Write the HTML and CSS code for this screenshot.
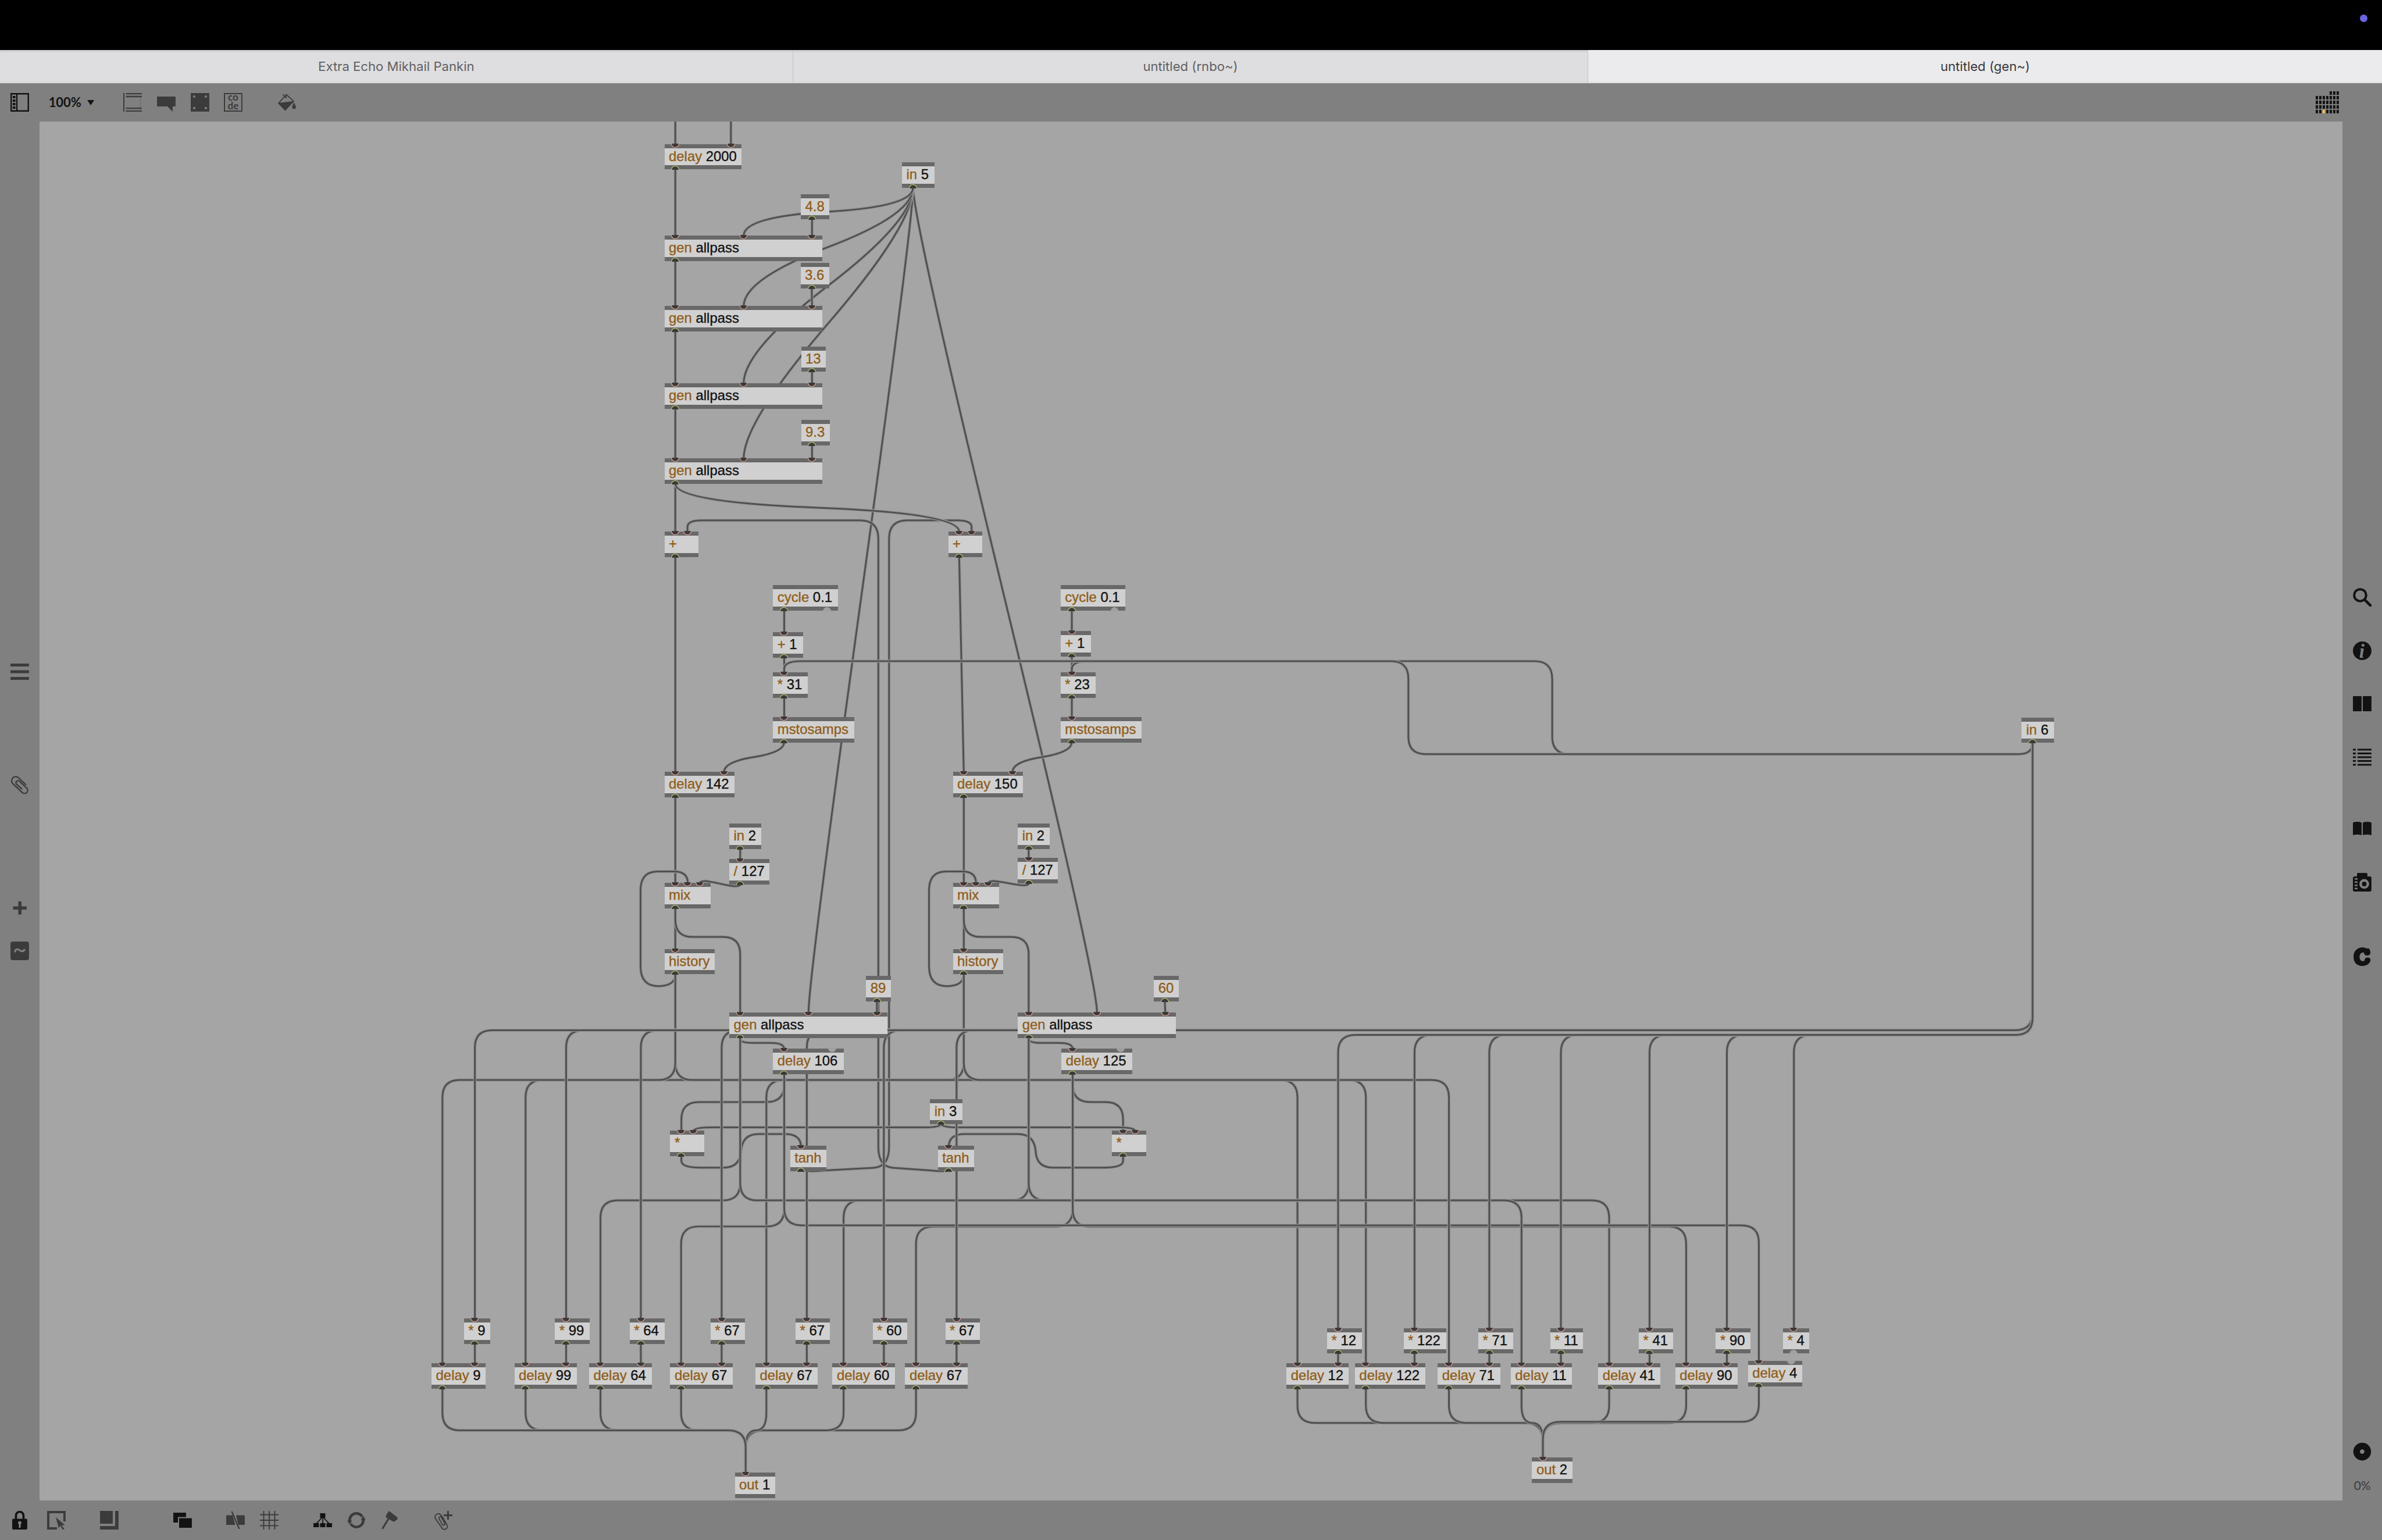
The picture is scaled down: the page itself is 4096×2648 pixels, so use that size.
FILE: index.html
```html
<!DOCTYPE html>
<html lang="en">
<head>
<meta charset="utf-8">
<title>untitled (gen~)</title>
<link rel="stylesheet" href="styles.css">
</head>
<body>
<div class="app">
  <div class="menubar"><span class="camera-dot"></span></div>
  <nav class="tabs">
    <div class="tab">Extra Echo Mikhail Pankin</div>
    <div class="tab">untitled (rnbo~)</div>
    <div class="tab tab-active">untitled (gen~)</div>
  </nav>
  <header class="toolbar toolbar-top">
    <svg class="icon strong" viewBox="0 0 32 32"><path d="M1.2 1.2H30.8V30.8H1.2zM11 1V31" fill="none" stroke="currentColor" stroke-width="2.4"/><path d="M4 5h4.500v4H4zM4 11h4.500v4H4zM4 17h4.500v4H4zM4 23h4.500v4H4z"/></svg>
    <div class="zoom-level">100%<span class="caret"></span></div>
    <div class="tool-group">
      <svg class="icon" viewBox="0 0 32 32"><path d="M0 0h2v32H0zM4.500 0H32v2H4.500zM4.500 5H32v2.400H4.500zM4.500 25H32v2.200H4.500zM4.500 30H32v2H4.500z"/><path d="M29.500 7v18M4.500 3.500H32M4.500 28.500H32" stroke="#686868" stroke-width="1" fill="none"/></svg>
      <svg class="icon" viewBox="0 0 32 32"><path d="M0 6h32v17h-5v9l-9-9H0z"/></svg>
      <svg class="icon" viewBox="0 0 32 32"><path d="M0 0h32v32H0z"/><g fill="#808080"><circle cx="6" cy="6" r="2.100"/><circle cx="26" cy="6" r="2.100"/><circle cx="6" cy="26" r="2.100"/><circle cx="26" cy="26" r="2.100"/></g></svg>
      <svg class="icon" viewBox="0 0 32 32"><path d="M1 1H31V31H1z" fill="none" stroke="currentColor" stroke-width="2"/><text class="code-text" x="16" y="13.500">co</text><text class="code-text" x="16" y="28">de</text></svg>
    </div>
    <svg class="icon bucket" viewBox="0 0 32 32"><path d="M15.500 2.500L2 17.500L13.500 29L28 14z" fill="none" stroke="currentColor" stroke-width="1.800"/><path d="M1 17l27-3L13.500 30.500zM28.500 16c2 4 3.500 6 3.500 8.200a3.300 3.300 0 0 1-6.600 0c0-2.200 1.600-4.200 3.100-8.200z"/><path d="M9 2l7 7M12 7l4-2" stroke="currentColor" stroke-width="1.600"/></svg>
    <svg class="icon-grid strong" viewBox="0 0 42 40" id="level-grid"></svg>
  </header>
  <main class="workspace">
    <aside class="rail rail-left">
      <svg class="icon" viewBox="0 0 32 32"><path d="M0 2h32v5H0zM0 13.500h32v5H0zM0 25h32v5H0z"/></svg>
      <svg class="icon" viewBox="0 0 32 32"><path d="M27 16L14 3.500A7 7 0 0 0 4 13.500L20.500 29A5.500 5.500 0 0 0 28.500 21.500L15.500 9.500A3.500 3.500 0 0 0 10.500 14.500L20 23" fill="none" stroke="currentColor" stroke-width="2.300"/></svg>
      <svg class="icon" viewBox="0 0 32 32"><path d="M13.500 5h5.500v8.500h9v5.500h-9v8.500h-5.500v-8.500h-9v-5.500h9z"/></svg>
      <svg class="icon" viewBox="0 0 32 32"><rect width="32" height="32" rx="4"/><path d="M7.500 18.500c1-7 6-5.500 8.500-3.500s7 3 8.500-2" fill="none" stroke="#808080" stroke-width="3.200"/></svg>
    </aside>
    <section class="patcher" id="patcher">
      <svg class="cords" id="cords" viewBox="68 210 3976 2380"></svg>
    </section>
    <aside class="rail rail-right">
      <div class="rail-group">
        <svg class="icon" viewBox="0 0 32 32"><circle cx="12.500" cy="12.500" r="10.300" fill="none" stroke="currentColor" stroke-width="4"/><path d="M20 20l10 10" stroke="currentColor" stroke-width="4.600" stroke-linecap="round"/></svg>
        <svg class="icon" viewBox="0 0 32 32"><circle cx="16" cy="16" r="16"/><text class="info-text" x="15.500" y="28">i</text></svg>
        <svg class="icon" viewBox="0 0 32 32"><path d="M0 3h15v26H0zM17 3h15v26H17z"/></svg>
        <svg class="icon" viewBox="0 0 32 32"><path d="M0 1.500h5v3H0zM8 1.500h24v3H8zM0 8h5v3H0zM8 8h24v3H8zM0 14.500h5v3H0zM8 14.500h24v3H8zM0 21h5v3H0zM8 21h24v3H8zM0 27.500h5v3H0zM8 27.500h24v3H8z"/></svg>
      </div>
      <div class="rail-group">
        <svg class="icon" viewBox="0 0 32 32"><path d="M0 5.500q7.500-3 15 0V27q-7.500-2-15 0zM17 5.500q7.500-3 15 0V27q-7.500-2-15 0z"/></svg>
        <svg class="icon" viewBox="0 0 32 32"><path d="M4 6h3V2q0-2 2-2h14q2 0 2 2v4h4q3 0 3 3v20q0 3-3 3H3q-3 0-3-3V9q0-3 3-3z"/><path d="M3 9h5v2.500H3zM3 14.500h5V17H3zM3 20h5v2.500H3zM3 25.500h5V28H3z" fill="#808080"/><circle cx="19.500" cy="19" r="6.200" fill="none" stroke="#808080" stroke-width="4.400"/></svg>
      </div>
      <svg class="icon brand" viewBox="0 0 32 32"><path d="M17 0c4 0 5.500 2 7.500 2s4-1.500 5.500 5c1 5-2 7.500-6 7c-3.500-.5-4.500-2-5-5c-4-1-7.500 2-7.500 7.500c0 6 4 8.500 8.500 6.500c0-4 2-5.500 5.500-5.500c4 0 5.500 2.500 4.500 6c-2 5.500-7 8.500-14 8.500C7 32 1 26 1 16S8 0 17 0z"/></svg>
      <svg class="icon" viewBox="0 0 32 32"><circle cx="16" cy="16" r="9.300" fill="none" stroke="currentColor" stroke-width="12"/><circle cx="16" cy="16" r="3.800" fill="#808080"/></svg>
      <div class="cpu">0%</div>
    </aside>
  </main>
  <footer class="toolbar toolbar-bottom">
    <svg class="icon strong" viewBox="0 0 32 32"><path d="M9.500 15V8a6.500 6.500 0 0 1 13 0v7" fill="none" stroke="currentColor" stroke-width="3.600"/><rect x="3" y="13.500" width="26" height="18.500" rx="2"/><path d="M16 17.500a3 3 0 0 1 1.600 5.500v6h-3.200v-6A3 3 0 0 1 16 17.500z" fill="#808080"/></svg>
    <svg class="icon gap-a" viewBox="0 0 32 32"><path d="M0 0h32v18h-4V4H4v24h13v4H0z"/><path d="M15 11l15.500 13-5.500 1 5 6-3 1.500-4-7-3 4z"/></svg>
    <svg class="icon gap-b" viewBox="0 0 32 32"><path d="M0 0h22v22H0zM26 0h6v32H0v-6h26z"/></svg>
    <svg class="icon strong gap-c" viewBox="0 0 32 32"><path d="M0 3h22v7.500H8V20H0zM10 12.500h22V29H10z"/></svg>
    <svg class="icon gap-b" viewBox="0 0 32 32"><path d="M0 7.500h11l4.500 16.500H0zM17 7.500h15V24H21z"/><path d="M9.500 1l13 30" stroke="currentColor" stroke-width="2.400"/></svg>
    <svg class="icon" viewBox="0 0 32 32"><path d="M6.500 0v32M16 0v32M25.500 0v32M0 6.500h32M0 16h32M0 25.500h32" stroke="currentColor" stroke-width="1.900"/></svg>
    <svg class="icon strong gap-b" viewBox="0 0 32 32"><path d="M11.500 4h9v8h-9zM0 21h9.500v7H0zM11.500 21h9v7h-9zM22.500 21H32v7h-9.500z"/><path d="M16 11v11M15 11L5 22M17 11l10 11" stroke="currentColor" stroke-width="1.700"/></svg>
    <svg class="icon" viewBox="0 0 32 32"><circle cx="16" cy="16" r="11.800" fill="none" stroke="currentColor" stroke-width="4.600"/><path d="M0 16.500h8.500L4.500 23.500zM32 15.500h-8.500L27.500 8.500z"/><path d="M4.500 23.500l4.500-6M27.500 8.500l-4.500 6" stroke="#808080" stroke-width="1.200"/></svg>
    <svg class="icon" viewBox="0 0 32 32"><path d="M3.500 31L15 12" stroke="currentColor" stroke-width="3"/><path d="M15 0l14.500 11v3.500L24 18.500l-2.500-.5L9 10.500l2-5z"/></svg>
    <svg class="icon gap-b" viewBox="0 0 32 32"><path d="M12 9L19 21.500a2.500 2.500 0 0 1-4 2.500L9 13.500A3.500 3.500 0 0 1 15 10.500L22.500 24A5 5 0 0 1 14 29.500L3 13.500A5.500 5.500 0 0 1 12.500 7.500L19 18" fill="none" stroke="currentColor" stroke-width="1.900"/><path d="M23 0h3v6h6v3h-6v6h-3V9h-6V6h6z"/></svg>
  </footer>
</div>
<script src="patch.js"></script>
</body>
</html>
```

FILE: styles.css
```css
* { box-sizing: border-box; }
html, body { margin: 0; width: 100%; height: 100%; overflow: hidden; background: #808080; }

.app {
  display: flex;
  flex-direction: column;
  width: 4112px;
  height: 2658.3px;
  zoom: 0.99611;
  color: #3b3b3b;
  font-family: "Liberation Sans", Arial, sans-serif;
}

.menubar {
  flex: 0 0 86px;
  display: flex;
  justify-content: flex-end;
  background: #000;
}
.camera-dot { width: 13px; height: 13px; margin: 25.5px 25.5px 0 0; border-radius: 50%; background: #6a64e6; }

.tabs {
  flex: 0 0 58px;
  display: grid;
  grid-template-columns: 1369px 1373px 1fr;
  background: #dedee0;
}
.tab {
  display: flex;
  align-items: center;
  justify-content: center;
  border-right: 1px solid #c6c6c8;
  border-bottom: 2px solid #ececee;
  box-shadow: inset 0 5px 5px -4px #bdbdc0, inset 0 -1px 0 #cfcfd1;
  color: #606062;
  font: 400 22.2px/1 Inter, sans-serif;
}
.tab-active { border-right: 0; background: #ebebed; box-shadow: inset 0 -1px 0 #d4d4d6; color: #38383a; }

.toolbar { display: flex; align-items: center; background: #808080; }
.toolbar-top { flex: 0 0 66px; padding: 0 72px 0 18px; }
.toolbar-bottom { flex: 0 0 68px; padding-left: 18px; gap: 26px; }
.icon { display: block; flex: none; width: 32px; height: 32px; fill: currentColor; overflow: visible; }
.strong { color: #121212; }
.zoom-level {
  display: flex;
  align-items: center;
  gap: 10px;
  width: 129px;
  margin-left: 34px;
  color: #121212;
  font: 700 22px/32px Lato, sans-serif;
}
.caret { border: 6.5px solid transparent; border-top: 10px solid #121212; border-bottom: 0; }
.tool-group { display: flex; gap: 26px; }
.bucket { margin-left: 60px; }
.code-text { font: 700 17px Lato, sans-serif; text-anchor: middle; }
.icon-grid { width: 42px; height: 40px; margin-left: auto; fill: currentColor; transform: translateY(1px); }
.gap-a { margin-left: 5px; }
.gap-b { margin-left: 34px; }
.gap-c { margin-left: 68px; }

.workspace { flex: 1; display: flex; min-height: 0; }
.rail { flex: 0 0 68px; display: flex; flex-direction: column; align-items: center; background: #808080; }
.rail-left { padding-top: 933px; }
.rail-left .icon:nth-child(2) { margin-top: 164px; }
.rail-left .icon:nth-child(3) { margin-top: 180px; }
.rail-left .icon:nth-child(4) { margin-top: 42px; }
.rail-right { padding-top: 805px; gap: 92px; color: #121212; }
.rail-group { display: flex; flex-direction: column; gap: 60px; }
.brand { margin: 4px 0 731px; }
.info-text { font: italic 700 33px "Liberation Serif", serif; fill: #808080; text-anchor: middle; }
.cpu { margin-top: -66px; color: #3b3b3b; font: 400 21px/32px Lato, sans-serif; }

.patcher { position: relative; flex: 1; overflow: hidden; background: #a5a5a5; }
.cords { display: block; width: 3976px; height: 2380px; fill: none; }
.cord-edge { stroke: #969696; stroke-width: 5.4; }
.cord-core { stroke: #505050; stroke-width: 3; }

.object {
  position: absolute;
  height: 44px;
  padding-left: 7.5px;
  border: solid #686868;
  border-width: 8px 0;
  background: #d0d0d0;
  color: #111;
  font-size: 24px;
  line-height: 28px;
  white-space: pre;
  -webkit-text-stroke: 0.35px currentColor;
}
.object b { font-weight: 400; color: #8f5c18; }
.port {
  position: absolute;
  width: 14px;
  height: 7px;
  margin-left: -7px;
  border: 2px solid #f6b0a2;
  background: #3a3a3a;
}
.inlet { top: -8px; border-top: 0; border-radius: 0 0 7px 7px; }
.outlet { bottom: -8px; border-color: #d3dc76; border-bottom: 0; border-radius: 7px 7px 0 0; }
.port.unused { border-color: #a0a0a0; background: #a0a0a0; }
```

FILE: patch.js
```js
const SVG = 'http://www.w3.org/2000/svg';
const ORIGIN = { x: 68, y: 210 };

// Object boxes: name, arguments, x, y, width, inlets, outlets.
// A port is an x coordinate; a negative one has no cord.
const objects = [
  ['delay', '2000', 1147, 248.5, 133, [1165.5, 1261.5], [1165.5]],
  ['in', '5', 1557, 280.5, 56, [], [1576]],
  ['4.8', '', 1382.5, 335, 49.5, [], [1401.5]],
  ['gen', 'allpass', 1147, 406.5, 273, [1165.5, 1283.5, 1401.5], [1165.5]],
  ['3.6', '', 1382, 454, 50, [], [1401]],
  ['gen', 'allpass', 1147, 528.5, 273, [1165.5, 1283.5, 1401.5], [1165.5]],
  ['13', '', 1383, 598, 43, [], [1401.5]],
  ['gen', 'allpass', 1147, 661.5, 273, [1165.5, 1283.5, 1401.5], [1165.5]],
  ['9.3', '', 1383, 725, 49.5, [], [1401.5]],
  ['gen', 'allpass', 1147, 791.5, 273, [1165.5, 1283.5, 1401.5], [1165.5]],
  ['+', '', 1147, 918, 58.5, [1165.5, 1186.5], [1165.5]],
  ['+', '', 1637, 918, 58.5, [1655.5, 1677], [1655.5]],
  ['cycle', '0.1', 1334.5, 1010, 112, [], [1353.5, -1428]],
  ['cycle', '0.1', 1831, 1010, 112, [], [1850, -1924]],
  ['+', '1', 1334.5, 1091, 52, [1353.5], [1353.5]],
  ['+', '1', 1831, 1089, 52, [1850], [1850]],
  ['*', '31', 1334.5, 1161, 60, [1353.5], [1353.5]],
  ['*', '23', 1831, 1161, 60, [1850], [1850]],
  ['mstosamps', '', 1334.5, 1238, 140, [1353.5], [1353.5]],
  ['mstosamps', '', 1831, 1238, 140, [1850], [1850]],
  ['delay', '142', 1147, 1332, 121, [1165.5, 1249.5], [1165.5]],
  ['delay', '150', 1645, 1332, 121, [1663.5, 1747.5], [1663.5]],
  ['in', '2', 1259, 1422, 55, [], [1277.5]],
  ['in', '2', 1757, 1422, 55, [], [1775.5]],
  ['/', '127', 1259, 1483, 69.5, [1277.5], [1277.5]],
  ['/', '127', 1757, 1481, 69.5, [1775.5], [1775.5]],
  ['mix', '', 1147, 1524, 79.5, [1165.5, 1187, 1207.5], [1165.5]],
  ['mix', '', 1645, 1524, 79.5, [1663.5, 1684.5, 1705.5], [1663.5]],
  ['history', '', 1147, 1638, 87, [1165.5], [1165.5]],
  ['history', '', 1645, 1638, 87, [1663.5], [1663.5]],
  ['89', '', 1495, 1685, 43, [], [1513.5]],
  ['60', '', 1992, 1685, 43, [], [2010.5]],
  ['gen', 'allpass', 1259, 1747.5, 273, [1277.5, 1395.5, 1513.5], [1277.5]],
  ['gen', 'allpass', 1757, 1747.5, 273, [1775.5, 1893.5, 2011.5], [1775.5]],
  ['delay', '106', 1334.5, 1810, 122, [1353.5, -1437], [1353.5]],
  ['delay', '125', 1832.5, 1810, 122, [1851.5, -1935], [1851.5]],
  ['in', '3', 1605.5, 1897, 56, [], [1624.5]],
  ['*', '', 1157, 1952, 59, [1176, 1197], [1176]],
  ['*', '', 1919.5, 1952, 59, [1938.5, 1959.5], [1938.5]],
  ['tanh', '', 1364, 1978, 63, [1382.5], [1382.5]],
  ['tanh', '', 1619, 1978, 63, [1637.5], [1637.5]],
  ['in', '6', 3490, 1238.5, 56, [], [3508.6]],
  ['*', '9', 801, 2276, 45.5, [819.5], [819.5]],
  ['*', '99', 958, 2276, 59.5, [977], [977]],
  ['*', '64', 1087, 2276, 60, [1106], [1106]],
  ['*', '67', 1226.5, 2276, 59.5, [1245.5], [1245.5]],
  ['*', '67', 1373.5, 2276, 59.5, [1392.5], [1392.5]],
  ['*', '60', 1506.5, 2276, 60, [1525.5], [1525.5]],
  ['*', '67', 1632, 2276, 60, [1651], [1651]],
  ['delay', '9', 745, 2353.5, 93.5, [763.5, 819.5], [763.5]],
  ['delay', '99', 888, 2353.5, 108, [907, 977], [907]],
  ['delay', '64', 1017, 2353.5, 108, [1036.3, 1106], [1036.3]],
  ['delay', '67', 1157, 2353.5, 107.5, [1175.5, 1245.5], [1175.5]],
  ['delay', '67', 1304, 2353.5, 107.5, [1322.7, 1392.5], [1322.7]],
  ['delay', '60', 1437, 2353.5, 108, [1456, 1525.5], [1456]],
  ['delay', '67', 1562.5, 2353.5, 108, [1581, 1651], [1581]],
  ['out', '1', 1268.5, 2542, 69.5, [1287], []],
  ['*', '12', 2291, 2292.5, 60, [2309.7], [2309.7]],
  ['*', '122', 2423, 2292.5, 73.5, [2441.6], [2441.6]],
  ['*', '71', 2552, 2292.5, 60, [2570.7], [2570.7]],
  ['*', '11', 2676, 2292.5, 57, [2694.3], [2694.3]],
  ['*', '41', 2829, 2292.5, 59, [2847.3], [2847.3]],
  ['*', '90', 2962, 2292.5, 59.5, [2980.8], [2980.8]],
  ['*', '4', 3078, 2292.5, 45, [3096.5], [-3096.5]],
  ['delay', '12', 2221, 2353.5, 107.5, [2239.5, 2309.7], [2239.5]],
  ['delay', '122', 2339, 2353.5, 121.5, [2357.6, 2441.6], [2357.6]],
  ['delay', '71', 2482, 2353.5, 108, [2501, 2570.7], [2501]],
  ['delay', '11', 2608, 2353.5, 105.5, [2626.3, 2694.3], [2626.3]],
  ['delay', '41', 2759, 2353.5, 107, [2777.6, 2847.3], [2777.6]],
  ['delay', '90', 2892, 2353.5, 107.5, [2910.5, 2980.8], [2910.5]],
  ['delay', '4', 3017.5, 2349.5, 94, [3036, -3092.3], [3036]],
  ['out', '2', 2644.7, 2516, 69.5, [2663.2], []],
];

const line = (x1, y1, x2, y2) => `M${x1} ${y1}L${x2} ${y2}`;

// Down (or up) to a horizontal run at y = ry, along it, then on to the end.
function rail(x1, y1, x2, y2, ry) {
  const dir = Math.sign(x2 - x1);
  const r = Math.min(30, Math.abs(x2 - x1) / 2);
  const a = Math.min(30, Math.abs(ry - y1)) * Math.sign(ry - y1);
  const b = Math.min(30, Math.abs(y2 - ry)) * Math.sign(y2 - ry);
  return `M${x1} ${y1}V${ry - a}Q${x1} ${ry} ${x1 + dir * r} ${ry}` +
    `H${x2 - dir * r}Q${x2} ${ry} ${x2} ${ry + b}V${y2}`;
}

// Free curve; k is how far each end keeps its vertical direction.
function swing(x1, y1, x2, y2, k) {
  return `M${x1} ${y1}Q${x1} ${y1 + k} ${(x1 + x2) / 2} ${(y1 + y2) / 2}` +
    `Q${x2} ${y2 - k} ${x2} ${y2}`;
}

const cords = [
  line(1165.5, 200, 1165.5, 250), line(1261.5, 200, 1261.5, 250),
  line(1165.5, 290, 1165.5, 410), line(1165.5, 448, 1165.5, 530),
  line(1165.5, 570, 1165.5, 663), line(1165.5, 704, 1165.5, 793),
  swing(1576, 324, 1395.5, 1748, 56), swing(1576, 324, 1893.5, 1748, 56),
  swing(1576, 324, 1283.5, 792, 64), swing(1576, 324, 1283.5, 662, 57),
  swing(1576, 324, 1283.5, 529, 47), swing(1576, 324, 1283.5, 407, 33),
  line(1401.5, 378, 1401.5, 408), line(1401, 497, 1401.5, 530),
  line(1401.5, 641, 1401.5, 663), line(1401.5, 768, 1401.5, 793),
  line(1165.5, 835, 1165.5, 920),
  'M1186.5 918V910Q1186.5 898.5 1211 898.5H1484Q1516 898.5 1516 930V1980Q1516 2014 1541 2016L1605 2020.5Q1637.5 2024 1637.5 2018',
  'M1677 918V910Q1677 898.5 1652 898.5H1566Q1534.5 898.5 1534.5 930V1980Q1534.5 2014 1508 2016L1425 2020.5Q1382.5 2024 1382.5 2018',
  swing(1165.5, 835, 1655.5, 918, 32),
  line(1165.5, 960, 1165.5, 1334), line(1655.5, 960, 1663.5, 1334),
  line(1353.5, 1053, 1353.5, 1093), line(1850, 1053, 1850, 1091),
  line(1353.5, 1134, 1353.5, 1163), line(1850, 1132, 1850, 1163),
  'M1850 1162V1155Q1850 1141.5 1878 1141.5H2649Q2679 1141.5 2679.3 1172V1272Q2679.3 1302 2709 1302H3485Q3508.6 1302 3508.6 1282',
  'M1353.5 1162V1155Q1353.5 1141.5 1382 1141.5H2401Q2431 1141.5 2431 1172V1272Q2431 1302 2461 1302H3485Q3508.6 1302 3508.6 1282',
  line(1353.5, 1204, 1353.5, 1240), line(1850, 1204, 1850, 1240),
  swing(1850, 1281, 1747.5, 1333, 18), swing(1353.5, 1281, 1249.5, 1333, 18),
  line(1165.5, 1375, 1165.5, 1526), line(1663.5, 1375, 1663.5, 1526),
  line(1277.5, 1465, 1277.5, 1485), line(1775.5, 1465, 1775.5, 1483),
  'M1277.5 1526Q1277.5 1530 1269 1530C1255 1530 1230 1521 1216 1521Q1208 1521 1207.5 1526',
  'M1775.5 1524Q1775.5 1528.5 1767 1528.5C1753 1528.5 1728 1521 1714 1521Q1706 1521 1705.5 1526',
  line(1165.5, 1567, 1165.5, 1640), line(1663.5, 1567, 1663.5, 1640),
  rail(1165.5, 1567, 1277.5, 1748, 1617.5), rail(1663.5, 1567, 1775.5, 1748, 1617.5),
  'M1165.5 1680Q1167 1702 1136 1702.5Q1105.5 1702.5 1105.5 1668V1537Q1105.5 1504.5 1135 1504.5H1163Q1187 1504.5 1187 1524',
  'M1663.5 1680Q1665 1702 1634 1702.5Q1603.5 1702.5 1603.5 1668V1537Q1603.5 1504.5 1633 1504.5H1661Q1684.5 1504.5 1684.5 1524',
  line(1513.5, 1728, 1513.5, 1750), line(2010.5, 1728, 2011.5, 1750),
  'M1277.5 1790V1794Q1277.5 1800.5 1300 1800.5H1330Q1353.5 1800.5 1353.5 1811',
  'M1775.5 1790V1794Q1775.5 1800.5 1798 1800.5H1828Q1851.5 1800.5 1851.5 1811',
  rail(1353.5, 1852, 1176, 1954, 1902.5), rail(1851.5, 1852, 1938.5, 1954, 1902.5),
  rail(1624.5, 1940, 1197, 1953, 1946.3), rail(1624.5, 1940, 1959.5, 1953, 1946.3),
  'M1176 1994V2004Q1176 2015.7 1208 2015.7H1249Q1277 2015.7 1279 1987Q1281 1957.7 1309 1957.7H1355Q1382.5 1957.7 1382.5 1980',
  'M1938.5 1994V2004Q1938.5 2015.7 1906 2015.7H1817Q1789 2015.7 1787.5 1987Q1785 1957.7 1757 1957.7H1665Q1637.5 1957.7 1637.5 1980',
  // history outputs
  rail(1663.5, 1680, 1322.7, 2355, 1864.5), rail(1663.5, 1680, 907, 2355, 1864.5),
  rail(1663.5, 1680, 2357.6, 2355, 1864.5), rail(1165.5, 1680, 2239.5, 2355, 1864.5),
  rail(1165.5, 1680, 763.5, 2355, 1864.5), rail(1663.5, 1680, 2501, 2355, 1864.5),
  // allpass outputs
  rail(1775.5, 1790, 1456, 2355, 2072.3), rail(1775.5, 1790, 2777.6, 2355, 2072.3),
  rail(1277.5, 1790, 1036.3, 2355, 2072.3), rail(1277.5, 1790, 2626.3, 2355, 2072.3),
  // delay outputs
  rail(1851.5, 1852, 1581, 2355, 2117.5), rail(1851.5, 1852, 2910.5, 2355, 2117.5),
  rail(1353.5, 1852, 1175.5, 2355, 2117.3), rail(1353.5, 1852, 3036, 2351, 2115.4),
  line(2626.3, 2105, 2626.3, 2355), line(2501, 1900, 2501, 2355),
];

// in 6 scales every delay time, left bank and right bank.
for (const x of [1651, 1525.5, 1392.5, 1245.5, 1106, 977, 819.5]) {
  cords.push(rail(3508.6, 1282, x, 2278, 1778.5));
}
for (const x of [3096.5, 2980.8, 2847.3, 2694.3, 2570.7, 2441.6, 2309.7]) {
  cords.push(rail(3508.6, 1282, x, 2294, 1786.7));
}
for (const x of [819.5, 977, 1106, 1245.5, 1392.5, 1525.5, 1651]) cords.push(line(x, 2318, x, 2355));
for (const x of [2309.7, 2441.6, 2570.7, 2694.3, 2847.3, 2980.8]) cords.push(line(x, 2335, x, 2355));
for (const x of [1581, 1456, 1322.7, 1175.5, 1036.3, 907, 763.5]) {
  cords.push(rail(x, 2396, 1287, 2544, 2469.3));
}
for (const x of [2239.5, 2357.6, 2501, 2626.3, 2910.5, 2777.6]) {
  cords.push(rail(x, 2396, 2663.2, 2518, 2456.4));
}
cords.push(rail(3036, 2392, 2663.2, 2518, 2454.6));

const cordLayer = document.getElementById('cords');
for (const d of cords) {
  for (const name of ['cord-edge', 'cord-core']) {
    const path = document.createElementNS(SVG, 'path');
    path.setAttribute('class', name);
    path.setAttribute('d', d);
    cordLayer.append(path);
  }
}

const patcher = document.getElementById('patcher');
for (const [name, args, x, y, width, inlets, outlets] of objects) {
  const box = document.createElement('div');
  box.className = 'object';
  box.style.left = `${x - ORIGIN.x}px`;
  box.style.top = `${y - ORIGIN.y}px`;
  box.style.width = `${width}px`;
  const label = document.createElement('b');
  label.textContent = name;
  box.append(label, args ? ` ${args}` : '');
  for (const [kind, ports] of [['inlet', inlets], ['outlet', outlets]]) {
    for (const px of ports) {
      const port = document.createElement('span');
      port.className = `port ${kind}${px < 0 ? ' unused' : ''}`;
      port.style.left = `${Math.abs(px) - x}px`;
      box.append(port);
    }
  }
  patcher.append(box);
}

const grid = document.getElementById('level-grid');
for (let row = 0; row < 5; row++) {
  for (let col = row === 0 ? 4 : 0; col < 7; col++) {
    const cell = document.createElementNS(SVG, 'rect');
    cell.setAttribute('x', col * 6);
    cell.setAttribute('y', row * 8);
    cell.setAttribute('width', 4);
    cell.setAttribute('height', 6);
    if (row === 4 && col === 2) cell.setAttribute('fill', '#f8bd42');
    grid.append(cell);
  }
}
```
